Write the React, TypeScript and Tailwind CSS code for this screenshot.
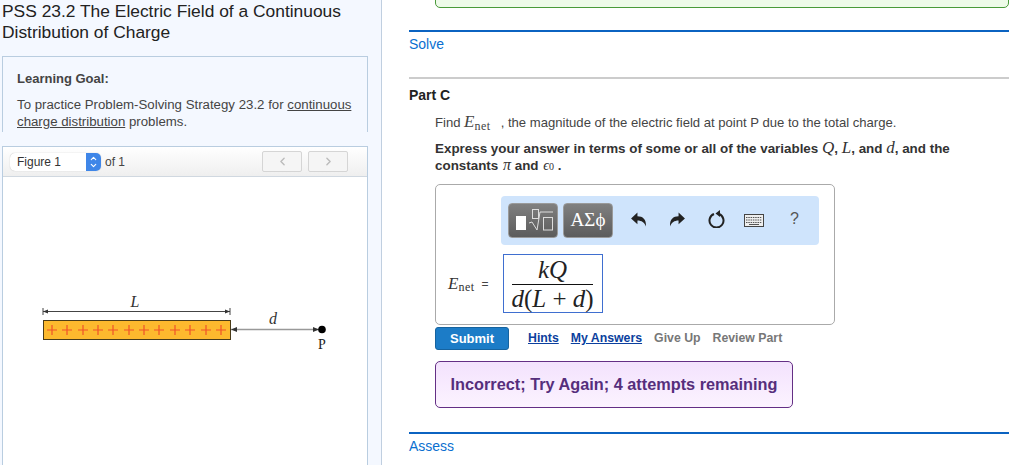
import { ChevronLeft, ChevronRight, ChevronDown, ChevronUp } from 'lucide-react'

const sans = 'font-["Liberation_Sans",Arial,sans-serif]'
const serif = 'font-["Liberation_Serif","Times_New_Roman",serif]'

function RodFigure() {
  const plusXs = [52, 67, 83, 98, 113, 129, 144, 159, 175, 190, 206, 221]
  return (
    <svg width="300" height="70" viewBox="30 285 300 70" className="block">
      <path d="M43 311.500H230M43 308v7M230 308v7" stroke="#444" strokeWidth="1" fill="none" />
      <path d="M43 311.500l5-2v4zM230 311.500l-5-2v4z" fill="#333" />
      <text x="135" y="307" fontFamily="Liberation Serif" fontStyle="italic" fontSize="16" textAnchor="middle" fill="#333">L</text>
      <rect x="43.500" y="320.500" width="187" height="19" fill="#fdb92e" stroke="#4a3b18" />
      {plusXs.map((x) => (
        <path key={x} d={`M${x - 5} 330H${x + 5}M${x} 325v10`} stroke="#f0532a" strokeWidth="1.2" />
      ))}
      <path d="M231 329.500H319" stroke="#999" strokeWidth="1.4" />
      <path d="M231 329.500l6-2.500v5zM319 329.500l-6-2.500v5z" fill="#333" />
      <circle cx="322" cy="329.500" r="3.800" fill="#000" />
      <text x="273" y="324" fontFamily="Liberation Serif" fontStyle="italic" fontSize="16" textAnchor="middle" fill="#333">d</text>
      <text x="322" y="349" fontFamily="Liberation Serif" fontSize="14" textAnchor="middle" fill="#222">P</text>
    </svg>
  )
}

function Toolbar() {
  return (
    <div className="ml-[65px] mt-[11px] h-[49px] w-[318px] rounded-[4px] bg-[#cfe4fc] flex items-center pl-[7px]">
      <div className="h-[35px] w-[50px] rounded-[4px] border border-[#9a9a9a] bg-gradient-to-b from-[#808080] to-[#5c5c5c] flex items-center justify-center">
        <svg width="41" height="26" viewBox="0 0 41 26">
          <rect x="3" y="8" width="10" height="14" fill="#fff" />
          <rect x="19.500" y="1.500" width="6" height="9" fill="none" stroke="#ddd" />
          <path d="M16 15l3-1 5 8 3-18h13" fill="none" stroke="#ddd" />
          <rect x="30.500" y="9.500" width="9" height="12.500" fill="none" stroke="#ddd" />
        </svg>
      </div>
      <div className={`ml-[5px] h-[35px] w-[50px] rounded-[4px] border border-[#9a9a9a] bg-gradient-to-b from-[#808080] to-[#5c5c5c] flex items-center justify-center text-[19px] text-white ${serif}`}>
        ΑΣϕ
      </div>
      <svg width="17" height="15" viewBox="0 0 16 14" className="-mt-[2px] ml-[17px]">
        <path d="M1 6L7 0.500V4C12 4 15.500 7 15 13.500 13.500 10 11 8 7 8v3.500z" fill="#222" />
      </svg>
      <svg width="17" height="15" viewBox="0 0 16 14" className="-mt-[2px] ml-[22px]">
        <path d="M15 6L9 0.500V4C4 4 0.500 7 1 13.500 2.500 10 5 8 9 8v3.500z" fill="#222" />
      </svg>
      <svg width="18" height="18" viewBox="0 0 18 18" className="-mt-[3px] ml-[22px]">
        <path d="M6 4a7 7 0 1 0 5 0" fill="none" stroke="#222" strokeWidth="2" />
        <path d="M12 0v7L7.500 3.500z" fill="#222" />
      </svg>
      <svg width="20" height="13" viewBox="0 0 20 13" className="ml-[18px]">
        <rect x="0.500" y="0.500" width="19" height="12" fill="#eee" stroke="#444" />
        <path d="M2 3.500h16M2 6h16M2 8.500h16" stroke="#555" strokeDasharray="1.500 0.800" />
        <path d="M5 10.500h10" stroke="#555" />
      </svg>
      <span className={`-mt-[3px] ml-[26px] text-[16px] text-[#555] ${sans}`}>?</span>
    </div>
  )
}

export default function App() {
  return (
    <div className={`flex h-[465px] w-[1024px] overflow-hidden bg-white text-[#333] ${sans}`}>
      <aside className="w-[382px] shrink-0 border-r border-[#c0cfe0] bg-[#f4f8ff] pl-[2px] pr-[13px]">
        <h1 className="pt-[1px] text-[17.4px] leading-[21px] text-[#222]">
          PSS 23.2 The Electric Field of a Continuous Distribution of Charge
        </h1>
        <div className="mt-[13px] h-[76px] border border-b-0 border-[#b9cde0] pl-[14px] pr-[10px] pt-[14px]">
          <h2 className="text-[13px] font-bold leading-[16px] text-[#444]">Learning Goal:</h2>
          <p className="mt-[9px] text-[13.25px] leading-[17px] text-[#444]">
            To practice Problem-Solving Strategy 23.2 for <u>continuous</u> <u>charge distribution</u> problems.
          </p>
        </div>
        <div className="mt-[14px] h-[319px] border border-b-0 border-[#b9cde0] bg-white">
          <div className="flex h-[30px] items-center border-b border-[#d0d8e0] bg-gradient-to-b from-white to-[#efefef] pl-[7px] pr-[19px]">
            <div className="flex h-[18px] w-[91px] items-center justify-between rounded-[5px] bg-white shadow-[0_0_1px_#aaa]">
              <span className="pl-[7px] text-[12px] text-[#333]">Figure 1</span>
              <span className="flex h-[18px] w-[15px] flex-col items-center justify-center rounded-r-[5px] bg-[#3f86e8] text-white">
                <ChevronUp size={9} strokeWidth={3} className="-mb-[1px]" />
                <ChevronDown size={9} strokeWidth={3} className="-mt-[1px]" />
              </span>
            </div>
            <span className="ml-[4px] text-[12px] text-[#444]">of 1</span>
            <button className="ml-auto flex h-[21px] w-[40px] items-center justify-center rounded-[2px] border border-[#d5d5d5] bg-[#f5f5f5] text-[#bbb]">
              <ChevronLeft size={13} strokeWidth={2.5} />
            </button>
            <button className="ml-[6px] flex h-[21px] w-[40px] items-center justify-center rounded-[2px] border border-[#d5d5d5] bg-[#f5f5f5] text-[#bbb]">
              <ChevronRight size={13} strokeWidth={2.5} />
            </button>
          </div>
          <div className="pl-[27px] pt-[108px]">
            <RodFigure />
          </div>
        </div>
      </aside>

      <main className="ml-[27px] w-[600px]">
        <div className="-mt-[10px] ml-[26px] h-[18px] w-[574px] rounded-[5px] border border-[#4a9a3a] bg-[#eefbe9]" />
        <div className="mt-[22px] border-t-2 border-[#0b63c1] pt-[2px] text-[14px] leading-[20px] text-[#0b6fd0]">Solve</div>
        <div className="mt-[23px] border-t-2 border-[#cccccc] pt-[7px] text-[14px] font-bold leading-[18px] text-[#222]">Part C</div>

        <div className="pl-[26px]">
          <p className="mt-[5px] flex h-[20px] items-baseline text-[13.1px] text-[#444]">
            Find&nbsp;
            <span className={`text-[17px] italic ${serif}`}>E</span>
            <span className={`relative top-[3px] text-[12px] tracking-[0.5px] ${serif}`}>net</span>
            <span className="ml-[10px]">, the magnitude of the electric field at point P due to the total charge.</span>
          </p>
          <p className="mt-[10px] h-[34px] text-[13.4px] font-bold leading-[17px] text-[#333]">
            Express your answer in terms of some or all of the variables{' '}
            <span className={`text-[17px] font-normal italic leading-none ${serif}`}>Q</span>,{' '}
            <span className={`text-[17px] font-normal italic leading-none ${serif}`}>L</span>, and{' '}
            <span className={`text-[17px] font-normal italic leading-none ${serif}`}>d</span>, and the
            <br />
            constants{' '}
            <span className={`ml-[1px] text-[16px] font-normal italic leading-none ${serif}`}>π</span> and{' '}
            <span className={`ml-[1px] text-[14px] font-normal italic leading-none ${serif}`}>ϵ</span>
            <span className={`text-[10px] font-normal leading-none ${serif}`}>0</span> .
          </p>

          <div className="mt-[11px] h-[141px] w-[400px] rounded-[5px] border border-[#aaaaaa]">
            <Toolbar />
            <div className="mt-[9px] flex items-center pl-[12px]">
              <span className={`text-[17px] italic text-[#333] ${serif}`}>E</span>
              <span className={`relative top-[3px] text-[12px] tracking-[0.5px] text-[#333] ${serif}`}>net</span>
              <span className="ml-[7px] text-[12px] text-[#444]">=</span>
              <div className={`ml-[14px] flex h-[59px] w-[100px] flex-col items-center justify-center border border-[#3f6fd0] text-[#222] ${serif}`}>
                <span className="w-[81px] border-b border-[#111] text-center text-[25px] italic leading-[28px]">kQ</span>
                <span className="text-[25px] leading-[27px]">
                  <i>d</i>(<i>L</i> + <i>d</i>)
                </span>
              </div>
            </div>
          </div>

          <div className="mt-[2px] flex h-[23px] items-center text-[12.3px] font-bold">
            <button className="h-[23px] w-[74px] rounded-[3px] border border-[#16639f] bg-[#1c7cc7] text-[13px] font-bold text-white">Submit</button>
            <a className="ml-[19px] text-[#0b3f9e] underline">Hints</a>
            <a className="ml-[12px] text-[#0b3f9e] underline">My Answers</a>
            <span className="ml-[12px] text-[#777]">Give Up</span>
            <span className="ml-[12px] text-[#777]">Review Part</span>
          </div>

          <div className="mt-[11px] flex h-[47px] w-[358px] items-center justify-center rounded-[5px] border border-[#642f85] bg-gradient-to-b from-[#f3e2fd] to-[#fcf3ff] text-[16.3px] font-bold text-[#562e7c]">
            Incorrect; Try Again; 4 attempts remaining
          </div>
        </div>

        <div className="mt-[24px] border-t-2 border-[#0b63c1] pt-[2px] text-[14px] leading-[20px] text-[#0b6fd0]">Assess</div>
      </main>
    </div>
  )
}
